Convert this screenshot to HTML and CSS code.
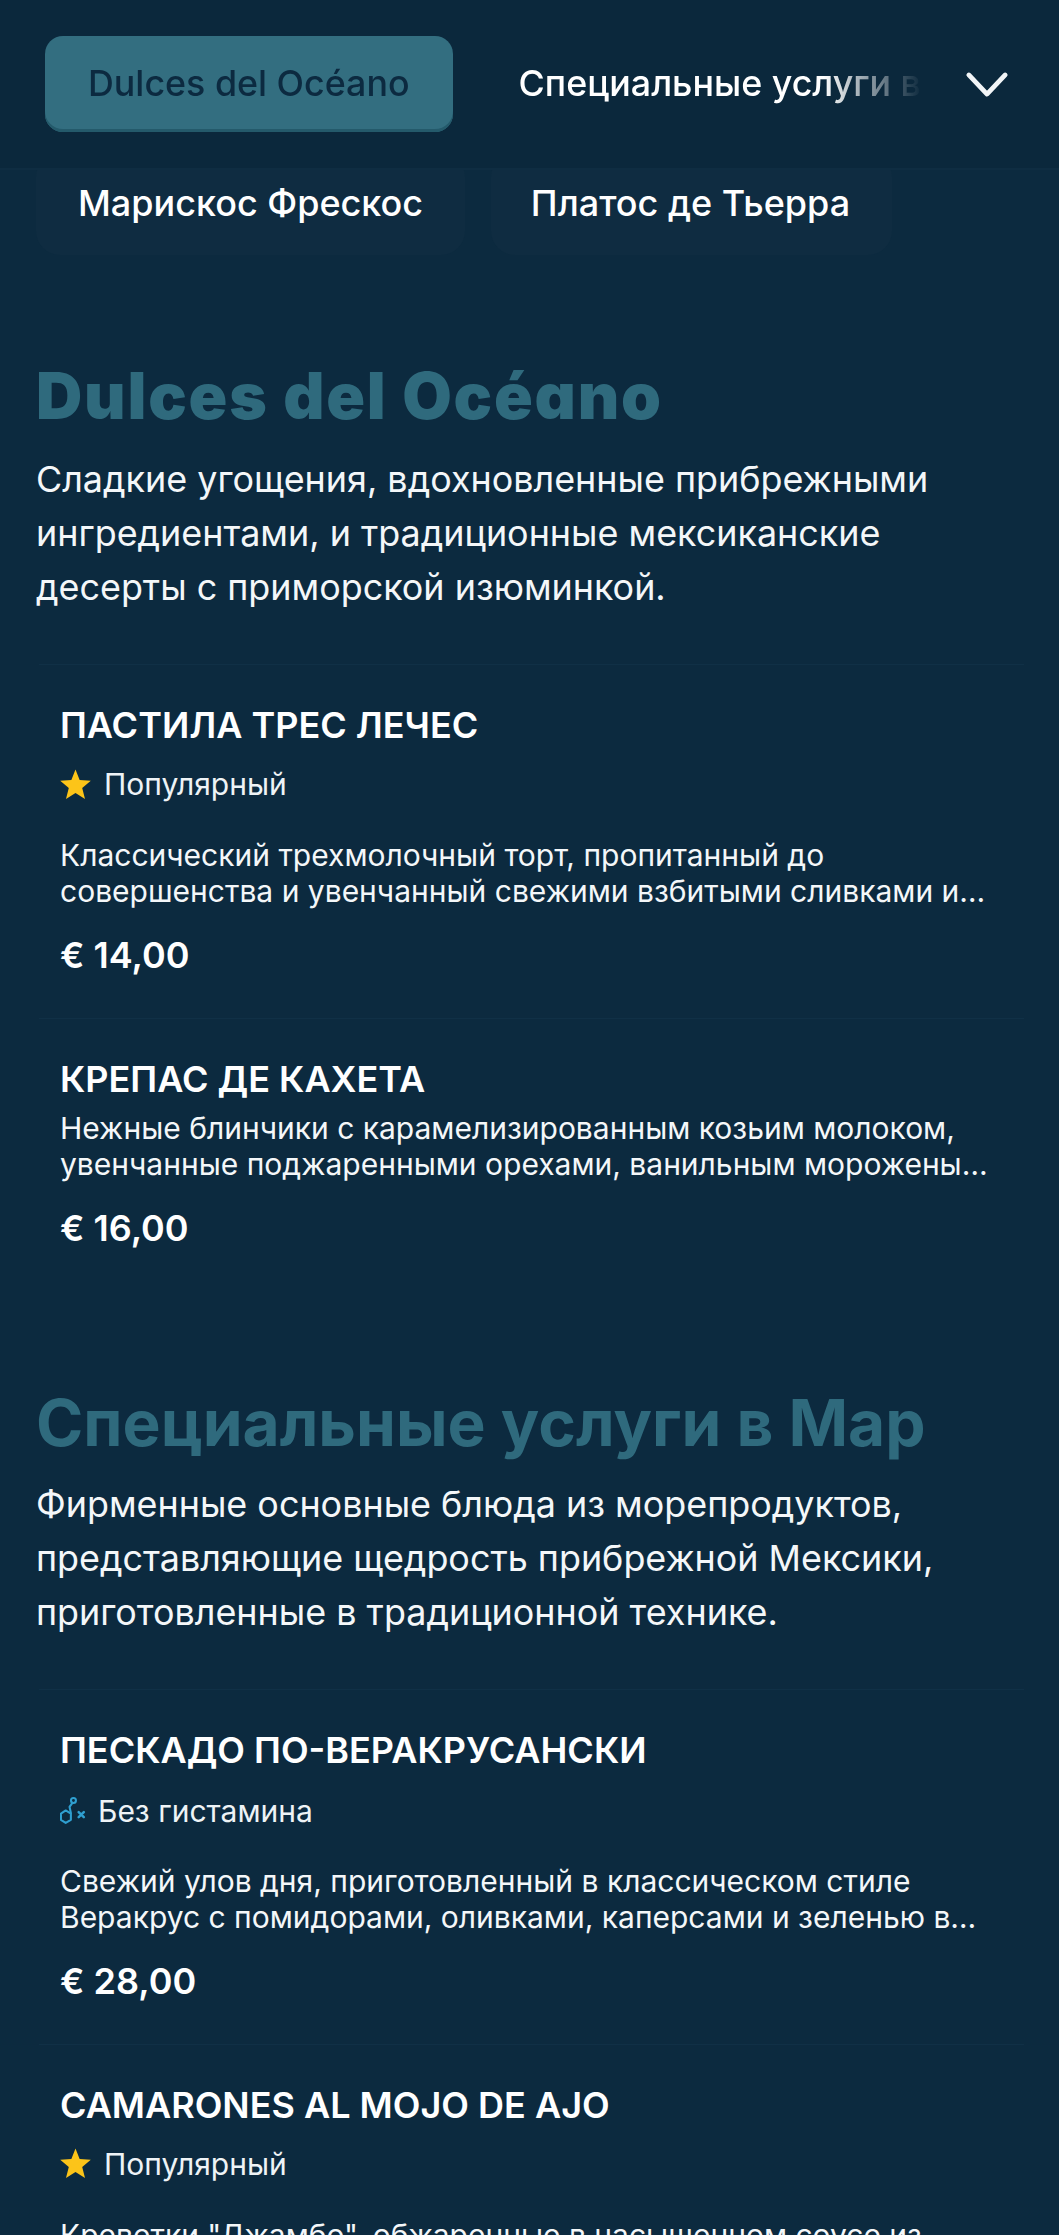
FILE: index.html
```html
<!DOCTYPE html>
<html lang="ru">
<head>
<meta charset="utf-8">
<title>Меню</title>
<link rel="stylesheet" href="styles.css">
</head>
<body>
<div class="page">
  <header class="tabbar">
    <nav class="tabs">
      <a class="tab tab-active">Dulces del Océano</a>
      <a class="tab">Специальные услуги в Мар</a>
    </nav>
    <svg class="chevron" viewBox="0 0 46 28" aria-hidden="true"><path d="M4 4 L23 24 L42 4"/></svg>
  </header>
  <div class="chips">
    <a class="chip chip-a">Марискос Фрескос</a>
    <a class="chip chip-b">Платос де Тьерра</a>
  </div>
  <main>
    <section class="section">
      <h2 class="section-title latin">Dulces del Océano</h2>
      <p class="section-desc">Сладкие угощения, вдохновленные прибрежными ингредиентами, и традиционные мексиканские десерты с приморской изюминкой.</p>
      <article class="item">
        <h3 class="item-title">ПАСТИЛА ТРЕС ЛЕЧЕС</h3>
        <div class="tag">
          <svg class="star" viewBox="0 0 30 30" aria-hidden="true"><path d="M15 .5 L19 10.6 L29.8 11.4 L21.5 18.4 L24.2 29 L15 23.2 L5.8 29 L8.5 18.4 L.2 11.4 L11 10.6 Z"/></svg>
          <span>Популярный</span>
        </div>
        <p class="item-desc">Классический трехмолочный торт, пропитанный до совершенства и увенчанный свежими взбитыми сливками и свежими ягодами сезона.</p>
        <div class="price">€ 14,00</div>
      </article>
      <article class="item item-plain">
        <h3 class="item-title">КРЕПАС ДЕ КАХЕТА</h3>
        <p class="item-desc">Нежные блинчики с карамелизированным козьим молоком, увенчанные поджаренными орехами, ванильным мороженым и корицей сверху.</p>
        <div class="price">€ 16,00</div>
      </article>
    </section>
    <section class="section">
      <h2 class="section-title">Специальные услуги в Мар</h2>
      <p class="section-desc">Фирменные основные блюда из морепродуктов, представляющие щедрость прибрежной Мексики, приготовленные в традиционной технике.</p>
      <article class="item">
        <h3 class="item-title">ПЕСКАДО ПО-ВЕРАКРУСАНСКИ</h3>
        <div class="tag tag-hist">
          <svg class="molecule" viewBox="0 0 28 28" aria-hidden="true">
            <circle cx="13" cy="3.4" r="2.4"/>
            <path d="M12 5.6 L9.2 9.5 L10.5 15.5"/>
            <path d="M5.5 13 L10.5 16 L10.5 22 L5.5 25 L.9 22 L.9 16 Z"/>
            <path class="molecule-x" d="M18 14.5 L23 19.5 M23 14.5 L18 19.5"/>
          </svg>
          <span>Без гистамина</span>
        </div>
        <p class="item-desc">Свежий улов дня, приготовленный в классическом стиле Веракрус с помидорами, оливками, каперсами и зеленью в ароматном соусе.</p>
        <div class="price">€ 28,00</div>
      </article>
      <article class="item">
        <h3 class="item-title">CAMARONES AL MOJO DE AJO</h3>
        <div class="tag">
          <svg class="star" viewBox="0 0 30 30" aria-hidden="true"><path d="M15 .5 L19 10.6 L29.8 11.4 L21.5 18.4 L24.2 29 L15 23.2 L5.8 29 L8.5 18.4 L.2 11.4 L11 10.6 Z"/></svg>
          <span>Популярный</span>
        </div>
        <p class="item-desc">Креветки "Джамбо", обжаренные в насыщенном соусе из чеснока, масла и лайма, подаются с рисом и свежими лепешками.</p>
        <div class="price">€ 32,00</div>
      </article>
    </section>
  </main>
</div>
</body>
</html>
```
FILE: styles.css
```css
* { box-sizing: border-box; }
html, body { margin: 0; padding: 0; background: #0c2a3f; }
.page {
  width: 1059px;
  height: 2235px;
  overflow: hidden;
  background: #0c2a3f;
  color: #fff;
  font-family: Inter, "Liberation Sans", sans-serif;
}
.tabbar {
  position: relative;
  z-index: 2;
  height: 170px;
  padding: 36px 50px 0 45px;
  display: flex;
  align-items: flex-start;
  justify-content: space-between;
  background: #0b283c;
  border-bottom: 2px solid #0f2d42;
}
.tabs {
  width: 895px;
  display: flex;
  gap: 23px;
  overflow: hidden;
  -webkit-mask-image: linear-gradient(to right, #000 0, #000 87%, transparent 98%);
  mask-image: linear-gradient(to right, #000 0, #000 87%, transparent 98%);
}
.tab {
  flex: none;
  height: 96px;
  padding: 0 43px 3px;
  display: flex;
  align-items: center;
  font-size: 35.8px;
  font-weight: 500;
  color: #fff;
  border-radius: 18px;
  white-space: nowrap;
}
.tab-active {
  background: #336e80;
  color: #0c2a40;
  box-shadow: inset 0 -3px 0 #245a6b;
}
.chevron {
  flex: none;
  width: 44px;
  height: 27px;
  margin-top: 35px;
  fill: none;
  stroke: #f2f5f7;
  stroke-width: 5;
  stroke-linecap: round;
  stroke-linejoin: round;
}
.chips {
  margin: -17px 0 0 36px;
  display: flex;
  gap: 26px;
}
.chip {
  height: 102px;
  padding-bottom: 2px;
  display: flex;
  align-items: center;
  justify-content: center;
  border-radius: 24px;
  background: #0f2c41;
  font-size: 36px;
  font-weight: 500;
  white-space: nowrap;
}
.chip-a { width: 429px; }
.chip-b { width: 401px; padding-right: 2px; }
.section { padding: 105px 35px 0 36px; }
.section + .section { padding-top: 96px; }
.section-title {
  margin: 0 0 18px;
  font-size: 64px;
  line-height: 72px;
  font-weight: 700;
  color: #2f6a7d;
  white-space: nowrap;
}
.latin {
  font-weight: 900;
  letter-spacing: 1.8px;
  font-feature-settings: "cv11" 1;
  margin-bottom: 20px;
}
.section-desc {
  margin: 0 0 50px;
  font-size: 35.9px;
  line-height: 54px;
  font-weight: 400;
  color: #f4f7f9;
}
.item {
  margin-left: 3px;
  padding: 38px 24px 41px 21px;
  border-top: 1px solid #103046;
}
.item-title {
  margin: 0;
  font-size: 36px;
  line-height: 44px;
  font-weight: 600;
}
.tag {
  margin-top: 19px;
  height: 36px;
  display: flex;
  align-items: center;
  gap: 13px;
  font-size: 30px;
  color: #eef3f6;
}
.tag-hist { gap: 9px; margin-top: 21px; }
.star { flex: none; width: 31px; height: 31px; fill: #fcc419; }
.molecule {
  flex: none;
  width: 29px;
  height: 29px;
  fill: none;
  stroke: #2f9fd0;
  stroke-width: 2;
  stroke-linecap: round;
  stroke-linejoin: round;
}
.molecule-x { stroke-width: 2.4; }
.item-desc {
  margin: 36px 0 0;
  font-size: 30px;
  line-height: 35.6px;
  color: #f4f7f9;
  display: -webkit-box;
  -webkit-box-orient: vertical;
  -webkit-line-clamp: 2;
  overflow: hidden;
}
.tag-hist + .item-desc { margin-top: 35px; }
.tag-hist ~ .price { margin-top: 23px; }
.item-plain .item-desc { margin-top: 10px; }
.price {
  margin-top: 24px;
  font-size: 36px;
  line-height: 44px;
  font-weight: 600;
}
```
